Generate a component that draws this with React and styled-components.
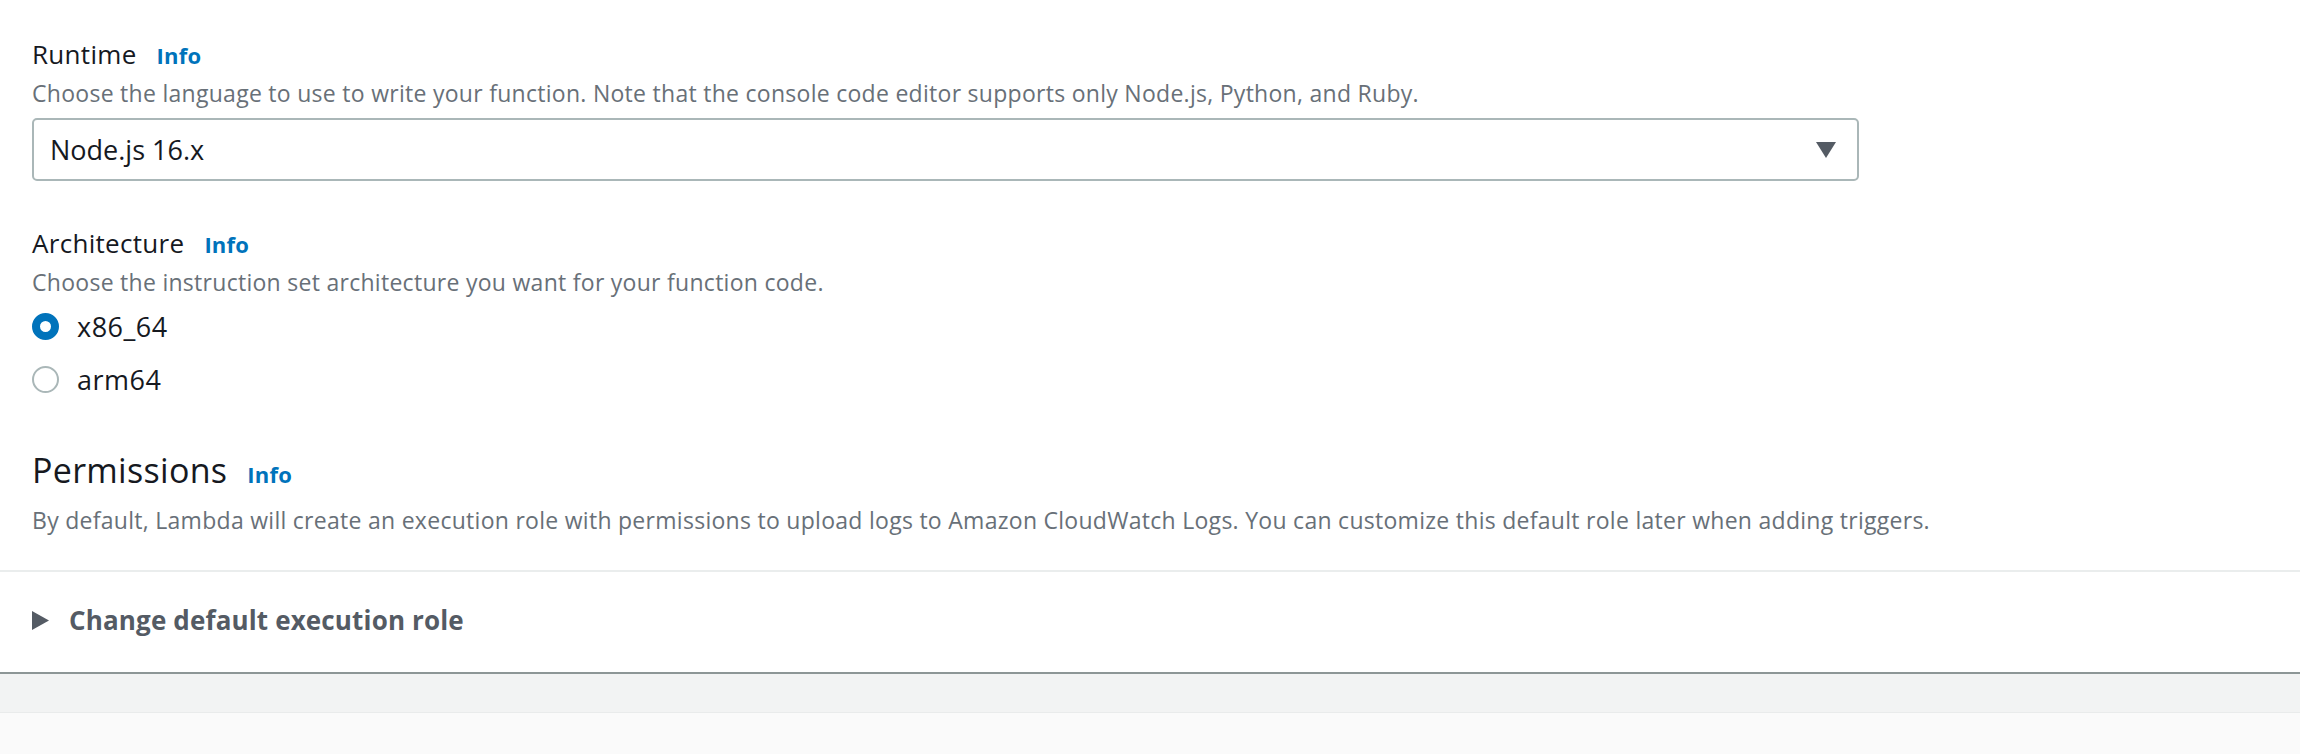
import React, { useState } from "react";
import styled, { createGlobalStyle } from "styled-components";

const GlobalStyle = createGlobalStyle`
  html, body {
    margin: 0;
    padding: 0;
    background: #fafafa;
    font-family: "Open Sans", "Noto Sans", Arial, sans-serif;
  }
`;

const Card = styled.div`
  background: #ffffff;
  border-bottom: 2px solid #8d9696;
  box-shadow: 0 1px 2px rgba(0, 28, 36, 0.25);
`;

const Body = styled.div`
  padding: 36px 32px 35px;
  border-bottom: 2px solid #eaeded;
`;

const Field = styled.div`
  margin-bottom: ${(p) => p.gap || 0}px;
`;

const LabelRow = styled.div`
  display: flex;
  align-items: baseline;
  gap: 20px;
  color: #16191f;
  font-size: ${(p) => (p.big ? 34 : 26)}px;
  letter-spacing: 0.3px;
  line-height: ${(p) => (p.big ? 40 : 36)}px;
`;

const InfoLink = styled.a`
  color: #0073bb;
  font-weight: 700;
  font-size: 22px;
  letter-spacing: 0.2px;
  text-decoration: none;
  cursor: pointer;
`;

const Description = styled.p`
  margin: ${(p) => p.top || 5}px 0 0;
  color: #687078;
  font-size: 23px;
  letter-spacing: 0.28px;
  line-height: 30px;
`;

const Select = styled.div`
  box-sizing: border-box;
  width: 1827px;
  height: 63px;
  margin-top: 10px;
  padding: 0 21px 0 16px;
  border: 2px solid #aab7b8;
  border-radius: 5px;
  display: flex;
  align-items: center;
  justify-content: space-between;
  color: #16191f;
  font-size: 27px;
  cursor: pointer;
`;

const RadioList = styled.div`
  margin-top: 3px;
  display: flex;
  flex-direction: column;
`;

const RadioRow = styled.label`
  height: 53px;
  display: flex;
  align-items: center;
  gap: 18px;
  color: #16191f;
  font-size: 27px;
  letter-spacing: 0.5px;
  line-height: 36px;
  cursor: pointer;
`;

const RadioDot = styled.span`
  box-sizing: border-box;
  width: 27px;
  height: 27px;
  border-radius: 50%;
  background: #ffffff;
  border: ${(p) => (p.checked ? "8px solid #0073bb" : "2px solid #aab7b8")};
`;

const Expander = styled.div`
  padding: 30px 32px 34px;
  display: flex;
  align-items: center;
  gap: 20px;
  color: #545b64;
  font-weight: 700;
  font-size: 26px;
  letter-spacing: 0.15px;
  line-height: 36px;
  cursor: pointer;
`;

const Footer = styled.div`
  height: 38px;
  background: #f2f3f3;
  border-bottom: 1px solid #e9ebeb;
`;

const Caret = () => (
  <svg width="20" height="16" viewBox="0 0 20 16">
    <polygon points="0,0 20,0 10,16" fill="#545b64" />
  </svg>
);

const Arrow = () => (
  <svg width="17" height="19" viewBox="0 0 17 19">
    <polygon points="0,0 17,9.5 0,19" fill="#545b64" />
  </svg>
);

export default function App() {
  const [arch, setArch] = useState("x86_64");

  return (
    <>
      <GlobalStyle />
      <Card>
        <Body>
          <Field gap={44}>
            <LabelRow>
              Runtime <InfoLink>Info</InfoLink>
            </LabelRow>
            <Description>
              Choose the language to use to write your function. Note that the
              console code editor supports only Node.js, Python, and Ruby.
            </Description>
            <Select>
              <span>Node.js 16.x</span>
              <Caret />
            </Select>
          </Field>

          <Field gap={44}>
            <LabelRow>
              Architecture <InfoLink>Info</InfoLink>
            </LabelRow>
            <Description>
              Choose the instruction set architecture you want for your
              function code.
            </Description>
            <RadioList>
              {["x86_64", "arm64"].map((a) => (
                <RadioRow key={a} onClick={() => setArch(a)}>
                  <RadioDot checked={arch === a} />
                  {a}
                </RadioRow>
              ))}
            </RadioList>
          </Field>

          <Field>
            <LabelRow big>
              Permissions <InfoLink>Info</InfoLink>
            </LabelRow>
            <Description top={11}>
              By default, Lambda will create an execution role with permissions
              to upload logs to Amazon CloudWatch Logs. You can customize this
              default role later when adding triggers.
            </Description>
          </Field>
        </Body>
        <Expander>
          <Arrow />
          Change default execution role
        </Expander>
      </Card>
      <Footer />
    </>
  );
}
